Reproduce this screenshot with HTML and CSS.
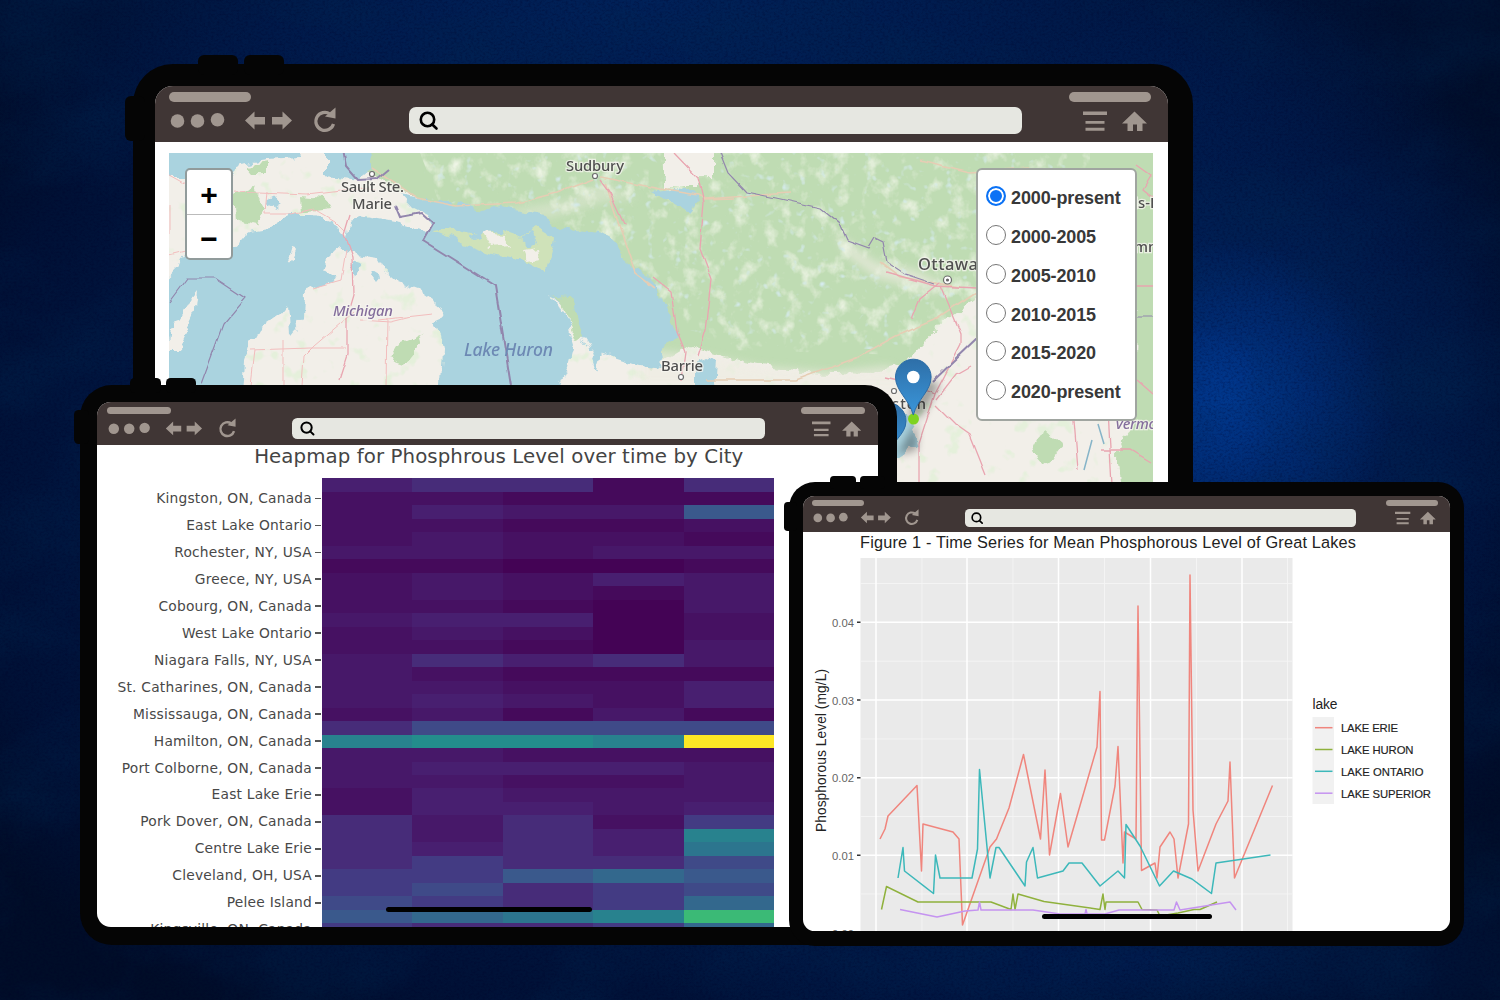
FILE: index.html
```html
<!DOCTYPE html>
<html lang="en">
<head>
<meta charset="utf-8">
<title>Great Lakes Phosphorus</title>
<link rel="stylesheet" href="styles.css">
</head>
<body>
<svg class="defs" aria-hidden="true">
  <symbol id="nav" viewBox="0 0 168 27">
    <g class="ico">
      <circle cx="7.5" cy="14" r="6.8"/><circle cx="27.5" cy="14" r="6.8"/><circle cx="47.500" cy="12.800" r="6.800"/>
      <path d="M75 13.5 84.500 4.500V10h10.500v7.500H84.500v5Z M122 13.500 112.500 4.500V10H102v7.500h10.500v5Z"/>
      <path class="ring" d="M163.500 17A9 9 0 1 1 160 7"/>
      <path d="M165.500.5V11.500L155 9.500Z"/>
    </g>
  </symbol>
  <symbol id="lens" viewBox="0 0 20 20"><circle class="lens" cx="8.500" cy="8.500" r="6.700"/><path class="lens" d="M13.300 13.500 17.500 17.500"/></symbol>
  <symbol id="tools" viewBox="0 0 64 27">
    <path class="ico" d="M0 4.500h24v3.500H0zM2.500 14h19v2.800H2.500zM2.500 20.800h19v3h-19zM51.500 4.500 64 16.500h-4.500V24H54v-6.500h-4V24h-5.500v-7.500H39Z"/>
  </symbol>
</svg>

<main class="stage">
  <svg class="texture" width="1500" height="1000" aria-hidden="true">
    <filter id="fine"><feTurbulence type="fractalNoise" baseFrequency=".35 .5" numOctaves="3" seed="4"/><feColorMatrix values="0 0 0 0 0  0 0 0 0 0  0 0 0 0 .02  1.6 0 0 0 -.68"/></filter>
    <filter id="cloud"><feTurbulence type="fractalNoise" baseFrequency=".008 .012" numOctaves="5" seed="11"/><feColorMatrix values="0 0 0 0 0  0 0 0 0 .02  0 0 0 0 .08  1.800 0 0 0 -.7"/></filter>
    <rect width="1500" height="1000" filter="url(#cloud)" opacity=".4"/>
    <rect width="1500" height="1000" filter="url(#fine)" opacity=".4"/>
  </svg>

  <section class="device device-map">
    <i class="key key-a"></i><i class="key key-b"></i><i class="key key-side"></i>
    <div class="screen">
      <header class="chrome">
        <div class="pills"><i></i><i></i></div>
        <div class="bar"><svg class="nav"><use href="#nav"/></svg><div class="search"><svg><use href="#lens"/></svg></div><svg class="tools"><use href="#tools"/></svg></div>
      </header>
      <div class="map">
        <svg class="tiles" viewBox="169 153 984 332">
          <defs>
            <filter id="coast" x="-5%" y="-5%" width="110%" height="110%"><feTurbulence type="fractalNoise" baseFrequency=".07" numOctaves="3" seed="3"/><feDisplacementMap in="SourceGraphic" scale="13" xChannelSelector="R" yChannelSelector="G"/></filter>
            <filter id="wobble" x="-5%" y="-5%" width="110%" height="110%"><feTurbulence type="fractalNoise" baseFrequency=".05" numOctaves="2" seed="8"/><feDisplacementMap in="SourceGraphic" scale="5" xChannelSelector="R" yChannelSelector="G"/></filter>
            <filter id="fields" x="0" y="0" width="100%" height="100%"><feTurbulence type="fractalNoise" baseFrequency=".06 .05" numOctaves="4" seed="15"/><feColorMatrix values="0 0 0 0 .86  0 0 0 0 .91  0 0 0 0 .79  2.500 0 0 0 -1.300"/><feComposite in2="SourceAlpha" operator="in"/></filter>
            <filter id="woods" x="0" y="0" width="100%" height="100%"><feTurbulence type="fractalNoise" baseFrequency=".055" numOctaves="3" seed="21"/><feColorMatrix values="0 0 0 0 .78  0 0 0 0 .87  0 0 0 0 .71  7 0 0 0 -4.200"/><feComposite in2="SourceAlpha" operator="in"/></filter>
            <filter id="ponds" x="0" y="0" width="100%" height="100%"><feTurbulence type="fractalNoise" baseFrequency=".11" numOctaves="2" seed="32"/><feColorMatrix values="0 0 0 0 .67  0 0 0 0 .83  0 0 0 0 .87  4 0 0 0 -2.600"/><feComposite in2="SourceAlpha" operator="in"/></filter>
            <filter id="haze"><feGaussianBlur stdDeviation="5"/></filter>
          </defs>
          <rect class="land" x="160" y="145" width="1000" height="350"/>
          <rect class="land" x="160" y="145" width="1000" height="350" filter="url(#woods)"/>
          <g filter="url(#coast)">
            <path class="forest" d="M372 140H1170V300L1130 310 1080 270 1000 265 975 300 940 325 905 362 870 374 800 372 745 362 712 352 690 345 650 370 590 300 500 215 440 205 398 190 366 172Z"/>
            <path class="forest" d="M1137 260h30v240h-45l-8-45 18-30ZM1048 430l14 12-4 12-15 10-12-14 6-13Z"/>
            <path class="forest" d="M233 195l20-8 12 20-8 18-22-5ZM245 165l22-4v13h-14ZM300 196l24 2 5 10-28 4ZM395 345l25-10 2 8-16 20-18-6Z"/>
          </g>
          <g filter="url(#haze)" opacity=".7"><path class="field" d="M640 350l60 5 60 12 70 5 60-6 20 20H640ZM835 232l40 30 40 8 30 15-8 8-60-15-30-22Z"/><path class="field" d="M480 214l90-14 30-16 40 14-40 4-50 16Z" opacity=".6"/></g>
          <path class="forest" d="M420 153h670v150L975 300 905 355 730 350 690 330 560 225 440 205Z" filter="url(#fields)"/>
          <path class="forest" d="M420 153h650v130L960 290 905 350 730 345 690 330 600 225 430 200Z" filter="url(#ponds)"/>
          <g filter="url(#coast)">
            <path class="land" d="M664 140h50v37h-17v10h-33Z"/>
            <path class="water" d="M150 140H318L300 157 265 159 238 163 232 176H150ZM326 140H368L373 168 358 180 326 176Z"/>
            <path class="water" d="M150 295 182 262 192 238 233 250 238 238 252 230 270 227 290 215 312 215 332 223 345 240 348 222 362 218 400 225 425 233 434 226 428 215 412 207 400 194 430 200 455 204 480 210 502 208 545 215 555 228 600 232 614 240 622 255 640 270 655 285 662 305 680 335 661 345 664 368 640 365 618 358 602 352 596 372 588 345 578 330 570 310 552 298 567 318 575 345 570 365 555 400H440L443 350 440 335 433 320 444 315 435 300 420 290 400 283 385 270 378 258 357 255 340 248 325 260 322 270 335 280 305 292 304 320 292 335 290 303 280 315 270 322 258 330 250 345 245 360 243 400H150Z"/>
            <path class="water" d="M651 192l20-3 26 4 3 8-8 10-18-6ZM693 364l12-6 12 4-2 26h-22ZM890 412l18 0 10 34-22 14Z"/>
            <path class="isle" d="M433 231l18-2 25 6 24-4 20 7 16-10 20 12-9 32-18-10-35-8-34-12Z"/>
            <path class="land" d="M482 232l22 2 6 10-20 2ZM522 250l16-2 2 10-14 2Z"/>
            <path class="water" d="M518 240l14-8 4 12-8 4ZM470 236l8-3 2 5-8 2Z"/>
            <path class="land" d="M190 300l8-10-2 20-18 40-10 0 3-20ZM290 245l5 8-4 10-3-7Z"/>
            <path class="forest" d="M555 297l17 1 6 20 6 18-8 3-8-20Z"/>
            <path class="water" d="M350 262l12 4-8 12ZM372 270l8 5-4 5-6-4ZM268 200l6-3 5 8-6 4Z"/>
          </g>
          <g class="road" filter="url(#wobble)">
            <path class="minor" d="M169 175l18 10M233 191l75 3 50-6 18 2M267 191l-2 23 25 0 25-5 20 12 10 10M169 255l20-5M346 250l-5 30-28 8M354 312l-40 34-10 10-2 30M250 350l60-2 35 0M378 320l55-6M387 318l-1 67M283 340l0 45M255 350l-4 35M360 320l30 2 20-5M170 235v-30"/>
            <path class="pale" d="M372 168l45 30 40 8 60-3 40-10 37-14M600 177l60 12 38 6 7 4 85-6M605 183l30 90 20 15M706 380l90 0 60-22 40-22 38-16 42-28M920 160l50 12 60-4M704 200l30-1M880 262l20 15 60 10"/>
            <path d="M350 215l-6 20 8 22 1 38-6 20 0 40-8 25M600 180l10 14 14 30M653 277l18 14 6 40 8 20-4 30M674 153l24 25 6 25-4 45 12 32-6 50-8 26M885 378l26 6 24 10M941 286l20 48 0 10-26 50-16 50 0 45M886 272l50 14 40 2 10 6M940 283l-20 16-8 20M1137 165l14 10-8 14 10 8M936 405l20 20 14 10 16 40M936 400l20-26 14-8M1137 286h20M1074 420l4 50M1100 450l30 0 20 12M1137 380l16 14M1108 410l4 75"/>
          </g>
          <g class="border" filter="url(#wobble)">
            <path d="M343 150l3 16 12 14 18-1 12-10M395 205l5 12 22-4 11 10-10 18 72 45 16 100"/>
            <path class="thin" d="M169 302l18-24h28l30 20-22 26-22 60M720 153l8 20 18 19 30 6 45 10 18 14 8 18 22 8 6-10 8 4 4 20 18 12 30 10M1137 317h18"/>
            <path d="M932 382l45-43"/>
          </g>
          <path class="stream" d="M1084 470l8-30M1098 424l6 20"/>
          <g class="town"><circle cx="595" cy="176" r="2.500"/><circle cx="681" cy="377" r="2.500"/><circle cx="372" cy="174" r="2.500"/><circle cx="894" cy="391" r="2.500"/><circle cx="947.500" cy="280" r="4"/><circle class="dot" cx="947.500" cy="280" r="1"/></g>
          <g class="place">
            <text x="566" y="171" textLength="58">Sudbury</text>
            <text x="341" y="192" textLength="63">Sault Ste.</text>
            <text x="352" y="209" textLength="40">Marie</text>
            <text x="661" y="371" textLength="42">Barrie</text>
            <text class="city" x="918" y="270" textLength="60">Ottawa</text>
            <text x="882" y="409" textLength="44">gston</text>
            <text x="1134" y="208">is-L</text>
            <text x="1134" y="252">mn</text>
          </g>
          <g class="place region">
            <text x="333" y="316" textLength="60">Michigan</text>
            <text x="1115" y="429" textLength="42">Vermo</text>
            <text class="lake" x="464" y="356" textLength="89">Lake Huron</text>
          </g>
          <defs>
            <linearGradient id="pin" x2="0" y2="1"><stop offset="0" stop-color="#2e6fa8"/><stop offset="1" stop-color="#3a96da"/></linearGradient>
            <filter id="soft" x="-50%" y="-50%" width="200%" height="200%"><feGaussianBlur stdDeviation="4"/></filter>
          </defs>
          <path d="M906 418l20-38 14 4-18 32ZM897 455l20-35 0 30Z" fill="#000" opacity=".35" filter="url(#soft)"/>
          <circle cx="913.500" cy="419" r="5.500" fill="#7ed321"/>
          <path class="pin" d="M887 457c-4-16-17-22-17-36a18 18 0 0 1 36 0c0 14-15 20-19 36Z"/>
          <path class="pin" d="M913.300 415C909 399 895.500 391 895.500 377a17.800 17.800 0 0 1 35.600 0C931 391 917.500 399 913.300 415Z"/>
          <circle cx="913.300" cy="377" r="6.300" fill="#fff"/>
        </svg>
        <div class="zoom"><span>+</span><span>−</span></div>
        <form class="layers">
          <label><i class="radio on"></i>2000-present</label>
          <label><i class="radio"></i>2000-2005</label>
          <label><i class="radio"></i>2005-2010</label>
          <label><i class="radio"></i>2010-2015</label>
          <label><i class="radio"></i>2015-2020</label>
          <label><i class="radio"></i>2020-present</label>
        </form>
      </div>
    </div>
  </section>

  <section class="device device-heat">
    <i class="key key-a"></i><i class="key key-b"></i><i class="key key-side"></i>
    <div class="screen">
      <header class="chrome">
        <div class="pills"><i></i><i></i></div>
        <div class="bar"><svg class="nav"><use href="#nav"/></svg><div class="search"><svg><use href="#lens"/></svg></div><svg class="tools"><use href="#tools"/></svg></div>
      </header>
      <h2 class="heat-title">Heapmap for Phosphrous Level over time by City</h2>
      <div class="heat">
        <ul class="cities">
          <li>Kingston, ON, Canada</li><li>East Lake Ontario</li><li>Rochester, NY, USA</li><li>Greece, NY, USA</li><li>Cobourg, ON, Canada</li><li>West Lake Ontario</li><li>Niagara Falls, NY, USA</li><li>St. Catharines, ON, Canada</li><li>Mississauga, ON, Canada</li><li>Hamilton, ON, Canada</li><li>Port Colborne, ON, Canada</li><li>East Lake Erie</li><li>Pork Dover, ON, Canada</li><li>Centre Lake Erie</li><li>Cleveland, OH, USA</li><li>Pelee Island</li><li>Kingsville, ON, Canada</li>
        </ul>
        <div class="cells" id="cells"></div>
      </div>
    </div>
    <i class="home"></i>
  </section>

  <section class="device device-chart">
    <i class="key key-a"></i><i class="key key-b"></i><i class="key key-side"></i>
    <div class="screen">
      <header class="chrome">
        <div class="pills"><i></i><i></i></div>
        <div class="bar"><svg class="nav"><use href="#nav"/></svg><div class="search"><svg><use href="#lens"/></svg></div><svg class="tools"><use href="#tools"/></svg></div>
      </header>
      <svg class="plot" viewBox="803 532 646.500 399">
        <text class="plot-title" x="860" y="548" textLength="496">Figure 1 - Time Series for Mean Phosphorous Level of Great Lakes</text>
        <rect x="860.500" y="558" width="432" height="380" fill="#eaeaea"/>
        <path class="grid-minor" d="M860.500 583.500h432M860.500 661.200h432M860.500 739h432M860.500 816.500h432M860.500 894h432M922 558v380M1013 558v380M1104.500 558v380M1196.500 558v380M1287.500 558v380"/>
        <path class="grid-major" d="M860.500 622.300h432M860.500 700h432M860.500 777.700h432M860.500 855.300h432M876 558v380M967 558v380M1058.500 558v380M1150.500 558v380M1242 558v380"/>
        <path class="tick" d="M857 622.300h3.500M857 700h3.500M857 777.700h3.500M857 855.300h3.500"/>
        <g class="axis"><text x="854" y="627">0.04</text><text x="854" y="704.500">0.03</text><text x="854" y="782">0.02</text><text x="854" y="860">0.01</text><text x="854" y="937.500">0.00</text></g>
        <text class="ylab" transform="translate(826 832) rotate(-90)" textLength="163">Phosphorous Level (mg/L)</text>
        <g class="series">
          <polyline class="erie" points="880,839 885,829 888,816 917,785.500 921.500,871 923,824 953,832 959,839 962.500,925 990,847 996.500,839 1009,808 1023.500,754.500 1040.500,839 1045,770 1049.500,855 1060.500,793.500 1068,847 1097,747 1100,691.500 1101.500,840 1104.500,840 1115,786 1118,746.500 1123,863 1124.500,832 1136,839 1138,606 1141.500,870.500 1155,863 1157,878 1160,847 1170,832 1174,839 1178,878 1188.500,824 1190,575 1193,810 1198,871 1216,824 1228,801 1230,762 1234.500,878 1272.500,785.500"/>
          <polyline class="huron" points="881.500,909.500 886.500,886.500 918,902 991,902 1011,909.500 1013,894 1015,909.500 1018,894 1044,901.500 1100,909.500 1103,894 1105,909.500 1106,902 1138,902 1142,909.500 1157,910 1160,916 1178,913 1194,909.500 1200,909.500 1217,902"/>
          <polyline class="ontario" points="898,878 903,847.500 904.500,871 933.500,893.500 935.500,855 940,878 972,878 977.500,849 979.500,769.500 990,878 996,847.500 999,847.500 1025,886 1026.500,862 1033,847.500 1037.500,878 1063,871 1069,863 1082,863 1100,886 1118,871 1124.500,878 1126,824.500 1140,846 1159.500,886 1173.500,871 1192,879 1211.500,893.500 1216,863 1270.500,855"/>
          <polyline class="superior" points="900,909.500 937,917 965,911 978,910 979.500,902 981,910 1033,910 1060,914 1085,914 1086,909.500 1087,914 1105,914 1119,910 1174,910 1176.500,902 1180,910 1230,902 1236,910"/>
        </g>
        <text class="leg-title" x="1312.500" y="708.500" textLength="25">lake</text>
        <rect x="1312.500" y="717" width="21.500" height="87" fill="#f1f1f1"/>
        <g class="series"><path class="erie" d="M1315 727.700h17.500"/><path class="huron" d="M1315 749.500h17.500"/><path class="ontario" d="M1315 771.300h17.500"/><path class="superior" d="M1315 793.200h17.500"/></g>
        <g class="leg"><text x="1341" y="732.200" textLength="57">LAKE ERIE</text><text x="1341" y="754" textLength="72.500">LAKE HURON</text><text x="1341" y="775.800" textLength="82.500">LAKE ONTARIO</text><text x="1341" y="797.700" textLength="90">LAKE SUPERIOR</text></g>
      </svg>
    </div>
    <i class="home"></i>
  </section>
</main>
<script src="heat.js"></script>
</body>
</html>
```
FILE: styles.css
```css
* { box-sizing: border-box; }
body { margin: 0; background: #000c2a; font-family: "Liberation Sans", Arial, sans-serif; }
.defs { position: absolute; width: 0; height: 0; }
.stage {
  position: relative; width: 1500px; height: 1000px; overflow: hidden;
  background:
    radial-gradient(ellipse 170px 160px at 1225px 400px, rgba(0, 66, 165, .7), rgba(0, 58, 150, .4) 50%, transparent),
    radial-gradient(ellipse 330px 420px at 1250px 380px, rgba(0, 48, 125, .5), transparent),
    radial-gradient(ellipse 900px 240px at 640px 0, rgba(0, 38, 100, .75), transparent),
    radial-gradient(ellipse 500px 120px at 1150px 960px, rgba(0, 36, 95, .6), transparent),
    radial-gradient(ellipse 900px 640px at 720px 480px, #002560, #001136 85%, #000d28);
}
.texture { position: absolute; inset: 0; }

/* Devices: 1em is 10px on the largest one, everything else scales */
.device { position: absolute; background: #050505; }
.device-map { left: 133px; top: 64px; width: 1059.500px; height: 660px; padding: 22px 24px 22px 22px; border-radius: 40px; font-size: 10px; }
.device-heat { left: 80px; top: 385px; width: 817px; height: 560px; padding: 17px 19px 18px 16.500px; border-radius: 32px; font-size: 7.710px; }
.device-chart { left: 789px; top: 482px; width: 675px; height: 464px; padding: 14px 14.500px 15px 14px; border-radius: 26px; font-size: 6.382px; }
.screen { height: 100%; background: #fff; border-radius: 1.800em; overflow: hidden; }
.device-map .screen { margin-right: .5px; }
.device-heat .screen { border-bottom-right-radius: 0; }
.key { position: absolute; background: #050505; border-radius: .6em; }
.key-a, .key-b { top: -.95em; height: 2em; width: 4em; }
.key-a { left: 6.500em; }
.key-b { left: 11.100em; }
.key-side { left: -.8em; top: 3.200em; width: 2em; height: 4.500em; }
.home { position: absolute; height: 5px; border-radius: 3px; background: #000; }
.device-heat .home { left: 305.500px; top: 522px; width: 206px; }
.device-chart .home { left: 253px; top: 432px; width: 170px; height: 4.500px; }

.chrome { height: 5.620em; padding: .6em 1.400em 0; background: #403635; }
.pills { display: flex; justify-content: space-between; padding-right: .35em; }
.pills i { width: 8.200em; height: 1em; border-radius: .5em; background: #a0968f; }
.bar { display: flex; align-items: flex-start; padding: .5em .75em 0 .1em; }
.nav { width: 16.800em; height: 2.700em; }
.search { width: 61.300em; height: 2.700em; margin-left: 7.100em; padding: .35em 1em; display: flex; border-radius: .7em; background: #e6e7e1; }
.search svg { width: 2em; height: 2em; }
.tools { width: 6.400em; height: 2.700em; margin-left: auto; }
.ico { fill: #a0968f; }
.ring { fill: none; stroke: #a0968f; stroke-width: 3.200; }
.lens { fill: none; stroke: #000; stroke-width: 2.600; stroke-linecap: round; }

/* Map */
.map { position: relative; margin: 11px 0 0 14px; width: 984px; height: 332px; display: flex; justify-content: space-between; align-items: flex-start; padding: 15px 16px; }
.tiles { position: absolute; inset: 0; width: 984px; height: 332px; }
.land { fill: #f2efe9; }
.forest { fill: #bfdcb3; }
.field { fill: #eeece2; }
.isle { fill: #cfe2b9; }
.water { fill: #aad3df; }
.road path { fill: none; stroke: #e9a5b0; stroke-width: 1.300; }
.road .minor { stroke: #f2bdbd; stroke-width: 1; }
.road .pale { stroke: #e6cdb4; stroke-width: 1.600; }
.border path { fill: none; stroke: #9286ad; stroke-width: 2; }
.border .thin { stroke-width: 1.200; }
.stream { fill: none; stroke: #86b4c8; stroke-width: 1.500; }
.town circle { fill: #fff; stroke: #6c6c6c; stroke-width: 1.200; }
.town .dot { fill: #555; }
.place { font: 500 14.800px "Noto Sans", "Open Sans", sans-serif; fill: #4f4f4f; stroke: #f7f5f0; stroke-opacity: .75; stroke-width: 2.500px; paint-order: stroke; }
.place .city { font-size: 16.500px; }
.region { font-style: italic; fill: #846e9c; }
.region .lake { font-size: 17.500px; fill: #6d89b4; stroke: none; }
.pin { fill: url(#pin); stroke: #2a6ba6; stroke-width: 1; }
.zoom { position: relative; width: 48px; height: 92px; border: 2px solid #919b9b; border-radius: 5px; background: #fff; }
.zoom span { display: block; height: 44px; font: bold 30px/50px "Liberation Sans", sans-serif; text-align: center; color: #000; }
.zoom span + span { border-top: 1px solid #bbb; line-height: 48px; }
.layers { position: relative; width: 161px; height: 253px; padding: 9px 0 0 8px; border: 2px solid #a0a5a0; border-radius: 6px; background: #fff; }
.layers label { display: flex; align-items: center; gap: 5px; height: 38.850px; font: bold 18px "Liberation Sans", sans-serif; color: #383838; white-space: nowrap; letter-spacing: -.12px; }
.radio { flex: none; width: 20px; height: 20px; margin-top: -5px; border: 1.500px solid #767676; border-radius: 50%; background: #fff; }
.radio.on { border: 2px solid #0b72f5; box-shadow: inset 0 0 0 2px #fff; background: #0b72f5; }

/* Heatmap */
.heat-title { margin: 0; height: 33px; padding-left: 23px; font: 19.800px/24px "DejaVu Sans", sans-serif; letter-spacing: .08px; color: #444; text-align: center; white-space: nowrap; }
.heat { display: flex; }
.cities { list-style: none; margin: 6.500px 0 0; padding: 0; width: 225.500px; font: 13.800px/26.980px "DejaVu Sans", sans-serif; letter-spacing: .22px; color: #484848; white-space: nowrap; }
.cities li { height: 26.980px; display: flex; justify-content: flex-end; align-items: center; gap: 3px; }
.cities li::after { content: ""; width: 6px; height: 1.500px; margin-right: 1px; background: #555; }
.cells { display: grid; grid-template-columns: repeat(5, 90.400px); grid-auto-rows: 13.490px; }

/* Line chart */
.plot { display: block; width: 646.500px; height: 399px; }
.plot text { font-family: "Liberation Sans", Arial, sans-serif; }
.plot-title { font-size: 16.300px; fill: #222; }
.grid-major { stroke: #fff; stroke-width: 1.500; }
.grid-minor { stroke: #f5f5f5; stroke-width: .9; }
.tick { stroke: #333; stroke-width: 1.500; }
.axis { font-size: 11.300px; fill: #666; text-anchor: end; }
.ylab { font-size: 13.800px; fill: #222; }
.leg-title { font-size: 13.800px; fill: #222; }
.leg { font-size: 11.300px; fill: #222; stroke: #222; stroke-width: .15; }
.series { fill: none; stroke-width: 1.500; stroke-linejoin: round; }
.erie { stroke: #f0857d; }
.huron { stroke: #8fb13c; }
.ontario { stroke: #3cb8ba; }
.superior { stroke: #c593f0; }
```
FILE: heat.js
```js
const scale = {
  0: "#440355", 1: "#450a5b", 2: "#461162", 3: "#471869", 4: "#481f70", 5: "#472c79",
  6: "#433b83", 7: "#3f4a88", 8: "#3a598c", 9: "#33688d", A: "#2c758e", B: "#28828e",
  C: "#238d8c", G: "#3bba76", Y: "#fde725"
};
const rows = [
  "45515", "22111", "24338", "22112", "23221", "33233", "11001", "23243", "23213",
  "22103", "34402", "23202", "22103", "35453", "32111", "33224", "34324", "23131",
  "57777", "BCCBY", "33222", "34443", "33223", "24333", "24434", "53526", "5354B",
  "5454A", "56557", "66898", "67567", "76569", "89ABG", "65569"
];
const box = document.getElementById("cells");
for (const row of rows) {
  for (const level of row) {
    const cell = document.createElement("i");
    cell.style.backgroundColor = scale[level];
    box.append(cell);
  }
}
```
